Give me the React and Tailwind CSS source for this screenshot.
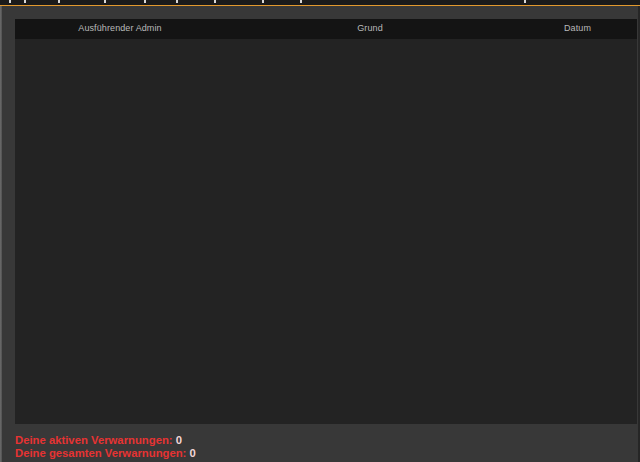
export default function App() {
  const marks = [9, 24, 58, 104, 144, 176, 214, 262, 300, 524];

  return (
    <div className="flex h-[462px] w-[640px] flex-col overflow-hidden bg-[#383838] font-['Liberation_Sans',Arial,sans-serif]">
      {/* cut-off title strip */}
      <div className="relative h-[5px] shrink-0 bg-[#1b1b1b]">
        {marks.map((x) => (
          <span
            key={x}
            className="absolute top-0 h-[3px] w-[2px] bg-[#d8d8d8]"
            style={{ left: x }}
          />
        ))}
      </div>
      <div className="h-[1px] shrink-0 bg-[#e39a2e]" />

      <div className="flex flex-1 bg-[#383838]">
        <div className="w-[2px] bg-gradient-to-r from-[#6e6e6e] to-[#505050]" />
        <div className="flex flex-1 flex-col pl-[13px] pr-[1px] pt-[13px]">
          <div className="flex h-[405px] flex-col bg-[#232323]">
            <div className="flex h-[20px] items-center bg-[#141414] text-[9px] tracking-[0.1px] text-[#b9b9b9]">
              <div className="w-[210px] text-center">Ausführender Admin</div>
              <div className="w-[290px] text-center">Grund</div>
              <div className="flex-1 pl-[3px] text-center">Datum</div>
            </div>
          </div>
          <div className="mt-[10px] flex flex-col text-[11.3px] font-bold leading-[13px] text-[#e63333]">
            <div>
              Deine aktiven Verwarnungen: <span className="text-[#f2d6d6]">0</span>
            </div>
            <div>
              Deine gesamten Verwarnungen: <span className="text-[#f2d6d6]">0</span>
            </div>
          </div>
        </div>
        <div className="w-[2px] bg-[#262626]" />
      </div>
    </div>
  );
}
